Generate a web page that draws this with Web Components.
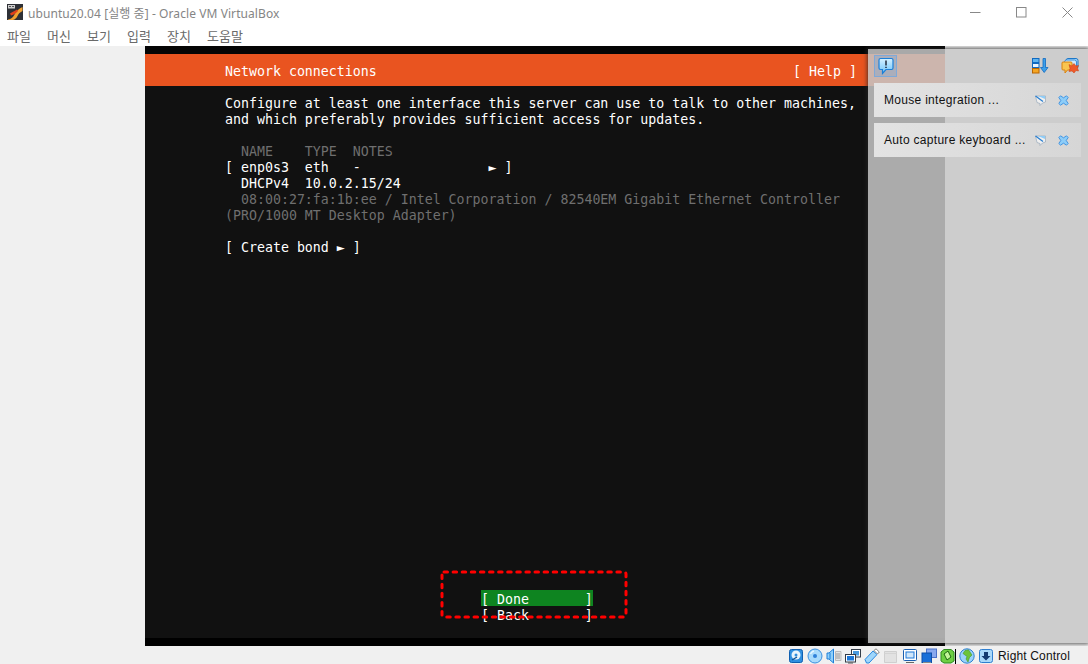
<!DOCTYPE html>
<html lang="ko">
<head>
<meta charset="utf-8">
<title>ubuntu20.04 - VirtualBox</title>
<style>
html,body{margin:0;height:100%;background:#f0f0f0;overflow:hidden;}
body{display:flex;flex-direction:column;height:664px;font-family:"Noto Sans CJK KR","Liberation Sans",sans-serif;}
</style>
</head>
<body>
<vb-titlebar title-text="ubuntu20.04 [실행 중] - Oracle VM VirtualBox"></vb-titlebar>
<vb-menubar items="파일,머신,보기,입력,장치,도움말"></vb-menubar>
<vb-viewport>
  <term-screen></term-screen>
  <vb-notices slot="overlay">
    <vb-notice>Mouse integration ...</vb-notice>
    <vb-notice>Auto capture keyboard ...</vb-notice>
  </vb-notices>
</vb-viewport>
<vb-statusbar></vb-statusbar>

<script>
class VbTitlebar extends HTMLElement{
  constructor(){
    super();
    this.attachShadow({mode:"open"});
    this.shadowRoot.innerHTML=`
<style>
:host{display:flex;align-items:center;height:24px;background:#fff;flex:none;}
svg{display:block;}
.app{margin-left:7px;flex:none;}
.txt{margin-left:5px;font:12px "Noto Sans","Noto Sans CJK KR",sans-serif;letter-spacing:.08px;color:#858585;flex:1;position:relative;top:1px;white-space:nowrap;}
.btns{display:flex;margin-right:-2px;}
.b{width:46px;height:24px;display:flex;align-items:center;justify-content:center;}
</style>
<svg class="app" width="16" height="16" viewBox="0 0 16 16">
  <rect width="16" height="16" fill="#2e3036"/>
  <path d="M1 15.500C4 15 6 13.500 7.500 10.500C9 8 10 6 15.500 3V7C12.500 8.500 11.500 10 10.500 12C9.500 14 8 15.500 6 16H1Z" fill="#f0a030"/>
  <path d="M3 9.500C5 8 8 7 10 5.500L11 7C9 9 7 11 4 11.500Z" fill="#e0401a"/>
  <rect x="1" y="1" width="7" height="3.500" fill="#cfcfcf"/>
  <path d="M2 2.500H4M5 2.500H7" stroke="#555"/>
</svg>
<span class="txt"></span>
<div class="btns">
  <div class="b"><svg width="11" height="11"><path d="M0 5.500H10.500" stroke="#888"/></svg></div>
  <div class="b"><svg width="11" height="11"><rect x=".5" y=".5" width="9.500" height="9.500" fill="none" stroke="#888"/></svg></div>
  <div class="b"><svg width="11" height="11"><path d="M.5 .5L10.500 10.500M10.500 .5L.5 10.500" stroke="#888"/></svg></div>
</div>`;
  }
  connectedCallback(){
    this.shadowRoot.querySelector(".txt").textContent=this.getAttribute("title-text");
  }
}
customElements.define("vb-titlebar",VbTitlebar);

class VbMenubar extends HTMLElement{
  constructor(){
    super();
    this.attachShadow({mode:"open"});
    this.shadowRoot.innerHTML=`
<style>
:host{display:flex;height:22px;padding-left:7px;background:#fff;flex:none;align-items:center;
font:13px "Noto Sans CJK KR",sans-serif;color:#6a6a6a;}
span{width:40px;white-space:nowrap;}
</style>`;
  }
  connectedCallback(){
    this.getAttribute("items").split(",").forEach(t=>{
      const s=document.createElement("span");
      s.textContent=t;
      this.shadowRoot.appendChild(s);
    });
  }
}
customElements.define("vb-menubar",VbMenubar);

class VbViewport extends HTMLElement{
  constructor(){
    super();
    this.attachShadow({mode:"open"});
    this.shadowRoot.innerHTML=`
<style>
:host{display:block;position:relative;height:600px;flex:none;padding-left:145px;background:#f0f0f0;overflow:hidden;}
::slotted([slot=overlay]){position:absolute;left:868px;top:3px;}
</style>
<slot></slot><slot name="overlay"></slot>`;
  }
}
customElements.define("vb-viewport",VbViewport);

class TermScreen extends HTMLElement{
  constructor(){
    super();
    this.attachShadow({mode:"open"});
    this.shadowRoot.innerHTML=`
<style>
:host{display:flex;flex-direction:column;position:relative;width:800px;height:600px;background:#111;box-sizing:border-box;
border-top:8px solid #050505;border-bottom:8px solid #000;
font:13.28px/16px "DejaVu Sans Mono","Liberation Mono",monospace;color:#fff;}
.head{display:flex;justify-content:space-between;height:32px;box-sizing:border-box;padding:4px 88px 0 80px;align-items:center;background:#e95420;white-space:pre;}
.body{padding:9px 0 0 80px;}
.l{height:16px;line-height:18px;white-space:pre;}
.dim{color:#6f6f6f;}
.foot{position:absolute;left:336px;top:536px;width:112px;}
.foot .l{line-height:20px;}
.done{background:#0e8420;}
.mark{position:absolute;left:295px;top:516px;display:block;}
</style>
<div class="head"><span>Network connections</span><span>[ Help ]</span></div>
<div class="body">
<div class="l">Configure at least one interface this server can use to talk to other machines,</div>
<div class="l">and which preferably provides sufficient access for updates.</div>
<div class="l"></div>
<div class="l dim">  NAME    TYPE  NOTES</div>
<div class="l">[ enp0s3  eth   -                ► ]</div>
<div class="l">  DHCPv4  10.0.2.15/24</div>
<div class="l dim">  08:00:27:fa:1b:ee / Intel Corporation / 82540EM Gigabit Ethernet Controller</div>
<div class="l dim">(PRO/1000 MT Desktop Adapter)</div>
<div class="l"></div>
<div class="l">[ Create bond ► ]</div>
</div>
<div class="foot"><div class="l done">[ Done       ]</div><div class="l">[ Back       ]</div></div>
<svg class="mark" width="188" height="50" viewBox="0 0 188 50"><rect x="2" y="2" width="184" height="45" rx="2" fill="none" stroke="#f00" stroke-width="3" stroke-linecap="round" stroke-dasharray="3.500 5.600"/></svg>`;
  }
}
customElements.define("term-screen",TermScreen);

class VbNotices extends HTMLElement{
  constructor(){
    super();
    this.attachShadow({mode:"open"});
    this.shadowRoot.innerHTML=`
<style>
:host{display:block;width:220px;height:594px;box-sizing:border-box;background:rgba(199,199,199,.852);
box-shadow:0 0 4px 1px rgba(40,40,40,.75);padding:0 7px 0 6px;}
.bar{height:34px;display:flex;align-items:center;justify-content:space-between;}
.sel{width:23px;height:22px;display:flex;align-items:center;justify-content:center;background:rgba(110,160,215,.35);border:1px solid #7fa9d8;box-sizing:border-box;}
.right{display:flex;gap:12px;margin-right:2px;}
.list{display:flex;flex-direction:column;gap:6px;}
svg{display:block;}
</style>
<div class="bar">
  <div class="sel">
    <svg width="18" height="18" viewBox="0 0 18 18">
      <defs><linearGradient id="bb" x1="0" y1="0" x2="0" y2="1"><stop offset="0" stop-color="#d4f0ff"/><stop offset="1" stop-color="#6cc4fb"/></linearGradient></defs>
      <path d="M3.500 1.500H14.500Q16 1.500 16 3V11Q16 12.500 14.500 12.500H9L5.500 16.500V12.500H3.500Q2 12.500 2 11V3Q2 1.500 3.500 1.500Z" fill="url(#bb)" stroke="#1d7fd6" stroke-width="1.200"/>
      <path d="M9 3.500V8.500M9 9.800V11" stroke="#0a1020" stroke-width="1.300"/>
    </svg>
  </div>
  <div class="right">
    <svg width="17" height="16" viewBox="0 0 17 16">
      <rect x=".5" y=".5" width="6.500" height="4" fill="#5fb4f0" stroke="#1069c0"/>
      <rect x=".5" y="5.500" width="6.500" height="4" fill="#e8f4ff" stroke="#1069c0"/>
      <rect x=".5" y="10.500" width="6.500" height="4.500" fill="#f5a623" stroke="#b86400"/>
      <path d="M11 .5H13.500V9.500H16L12.200 14.500L8.500 9.500H11Z" fill="#3ea0ea" stroke="#1069c0" stroke-width=".8"/>
    </svg>
    <svg width="18" height="16" viewBox="0 0 18 16">
      <rect x="5" y=".5" width="12" height="10" rx="2" fill="#a8d8fa" stroke="#1e78c8"/>
      <rect x="3.500" y="2" width="12" height="9" rx="2" fill="#cfe9fb" stroke="#3b8fdc"/>
      <path d="M2 4H10Q11 4 11 5V11Q11 12 10 12H6.500L4 15V12H2Q1 12 1 11V5Q1 4 2 4Z" fill="#f9c550" stroke="#d9820f"/>
      <path d="M8 6.500L10.500 8L13 5.500L15 8L17.500 7.500L16.500 10L17.500 13L15 12.500L13 15L11 13L8 13.500L9 10.500Z" fill="#ee5a2a" stroke="#c93c10" stroke-width=".5"/>
    </svg>
  </div>
</div>
<div class="list"><slot></slot></div>`;
  }
}
customElements.define("vb-notices",VbNotices);

class VbNotice extends HTMLElement{
  constructor(){
    super();
    this.attachShadow({mode:"open"});
    this.shadowRoot.innerHTML=`
<style>
:host{display:flex;align-items:center;height:34px;box-sizing:border-box;padding:0 12px 0 10px;background:linear-gradient(90deg,#e3e3e3,#d6d6d6);
font:12px "Liberation Sans",sans-serif;color:#111;white-space:nowrap;}
.t{flex:1;letter-spacing:.3px;}
.ic{display:flex;gap:12px;}
svg{display:block;}
</style>
<span class="t"><slot></slot></span>
<span class="ic">
  <svg width="11" height="11" viewBox="0 0 11 11"><path d="M.5 1H10.500V7L7.500 8L5 10.500V8.500L2 7.500Z" fill="#f0f0f0" stroke="#9ab" stroke-width=".7"/><path d="M.5 1L8 6.500" stroke="#2a7fd0" stroke-width="1.300"/><path d="M3 1H10V4Z" fill="#8fcdf8"/></svg>
  <svg width="11" height="11" viewBox="0 0 11 11"><path d="M2.500 .8L5.500 2.800L8.500 .8L10.200 2.500L8.200 5.500L10.200 8.500L8.500 10.200L5.500 8.200L2.500 10.200L.8 8.500L2.800 5.500L.8 2.500Z" fill="#8dcdf8" stroke="#3b90e0" stroke-width=".9"/></svg>
</span>`;
  }
}
customElements.define("vb-notice",VbNotice);

class VbStatusbar extends HTMLElement{
  constructor(){
    super();
    this.attachShadow({mode:"open"});
    this.shadowRoot.innerHTML=`
<style>
:host{display:flex;align-items:center;justify-content:flex-end;height:18px;box-sizing:border-box;padding:1px 18px 0 0;background:#f0f0f0;flex:none;
font:12px "Liberation Sans",sans-serif;color:#111;}
.icons{display:flex;gap:3px;margin-right:4px;}
svg{display:block;}
span{letter-spacing:.15px;}
</style>
<div class="icons">
  <svg width="16" height="16" viewBox="0 0 16 16"><rect x="1.500" y="1.500" width="13" height="13" rx="2" fill="#2f8fe0" stroke="#0f5fb0"/><circle cx="8" cy="7" r="4.500" fill="#e8f4fc"/><circle cx="8" cy="7" r="1.500" fill="#2f8fe0"/><path d="M4 12L9 9" stroke="#0f4f90" stroke-width="1.300"/></svg>
  <svg width="16" height="16" viewBox="0 0 16 16"><circle cx="8" cy="8" r="7" fill="#a8dafc" stroke="#3b90e0"/><circle cx="8" cy="8" r="2" fill="#2f80d8"/><path d="M3.500 6A5 5 0 0 1 7 3" stroke="#e8f6ff" stroke-width="1.300" fill="none"/></svg>
  <svg width="16" height="16" viewBox="0 0 16 16"><path d="M1 5H3L7.500 1V15L3 11H1Z" fill="#8fd0fa" stroke="#1e7fd8"/><path d="M4 5V11" stroke="#1e7fd8"/><path d="M9.500 3.500H15V12.500H9.500Z" fill="#e4e4e4" stroke="#bbb"/><path d="M11 5V11M13 5V11" stroke="#9a9a9a"/></svg>
  <svg width="16" height="16" viewBox="0 0 16 16"><rect x="6.500" y="1.500" width="9" height="7.500" fill="#fff" stroke="#333c48"/><rect x="8" y="3" width="6" height="4.500" fill="#4a9ade"/><rect x=".5" y="6.500" width="10" height="7.500" fill="#fff" stroke="#333c48"/><rect x="2" y="8" width="7" height="4.500" fill="#1e78d8"/><path d="M3 15H8" stroke="#555"/></svg>
  <svg width="16" height="16" viewBox="0 0 16 16"><path d="M1 11.500L9 3L13 6.500L5 15H2.500Z" fill="#9fd6fb" stroke="#2a88e0"/><path d="M10 2.500L12 .8L15.300 4L13.500 6Z" fill="#fff" stroke="#888"/></svg>
  <svg width="16" height="16" viewBox="0 0 16 16"><path d="M1.500 3.500H13.500V14.500H1.500Z" fill="#e2e2e2" stroke="#cfcfcf"/><path d="M1.500 5.500H13.500" stroke="#d4d4d4"/></svg>
  <svg width="16" height="16" viewBox="0 0 16 16"><rect x="1.500" y="1.500" width="13" height="11" rx="1" fill="#fff" stroke="#1b5fb0"/><rect x="4" y="4" width="8" height="6" fill="#cfe6fa" stroke="#1e78d8"/><path d="M4 14.500H12" stroke="#666"/></svg>
  <svg width="16" height="16" viewBox="0 0 16 16"><rect x="5.500" y="1" width="10" height="8.500" fill="#88a8ee" stroke="#4a70c8"/><rect x="1" y="5" width="9.500" height="9.500" fill="#1a6fd8" stroke="#0f4fa8"/><path d="M2 14.500H10" stroke="#888"/></svg>
  <svg width="16" height="16" viewBox="0 0 16 16"><path d="M1 4L4 1.500H11L14 4V13L11 15H4L1 13Z" fill="#6ed043" stroke="#2f8a1e"/><path d="M4 6L8 3L11 9L7 12Z" fill="#c4f59a" stroke="#1e6a10"/><path d="M15.500 1V16" stroke="#000"/></svg>
  <svg width="16" height="16" viewBox="0 0 16 16"><circle cx="8" cy="8" r="7.200" fill="#9ad2fb" stroke="#2f7fd0"/><path d="M6 2.500L9.500 1.800L13 7L10.500 9.500L9 14L7 11L8 8.500L4 5.500Z" fill="#6cc43a" stroke="#3d8a1e" stroke-width=".5"/></svg>
  <svg width="16" height="16" viewBox="0 0 16 16"><rect x="1.500" y="1.500" width="13" height="13" rx="2" fill="#a8d8fa" stroke="#2f7fd0"/><path d="M6 4H10V8H12.500L8 12.500L3.500 8H6Z" fill="#123a70"/></svg>
</div>
<span>Right Control</span>`;
  }
}
customElements.define("vb-statusbar",VbStatusbar);
</script>
</body>
</html>
